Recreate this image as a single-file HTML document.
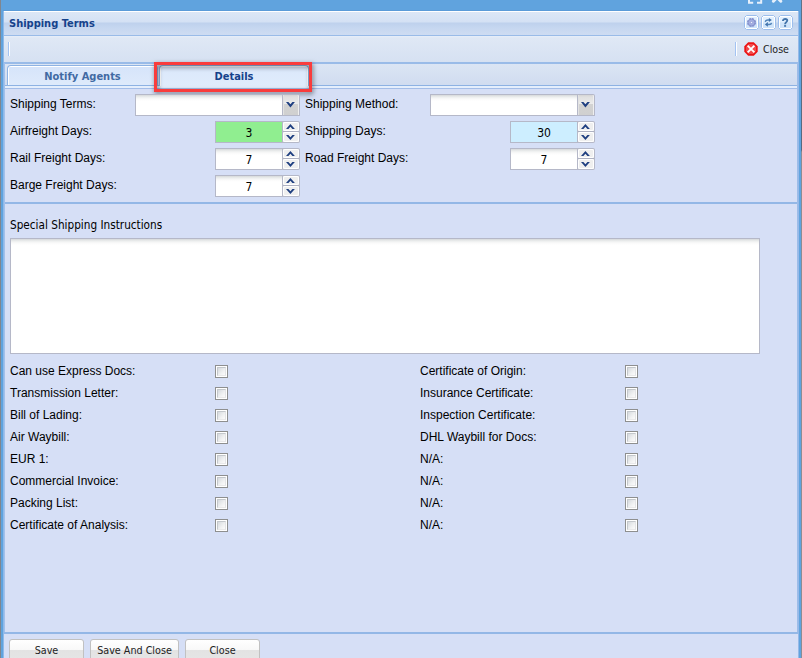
<!DOCTYPE html>
<html>
<head>
<meta charset="utf-8">
<title>Shipping Terms</title>
<style>
html,body{margin:0;padding:0;}
body{width:802px;height:658px;overflow:hidden;position:relative;background:#60a3de;font-family:"Liberation Sans",Arial,sans-serif;font-size:12px;color:#000;}
.abs{position:absolute;}
.tah{font-family:"DejaVu Sans Condensed","DejaVu Sans",sans-serif;}
#edgeL{left:0;top:0;width:1px;height:658px;background:#80868f;}
#edgeR{left:801px;top:0;width:1px;height:658px;background:linear-gradient(#5e7388 0,#56697f 150px,#8b8c94 152px,#8b8c94 100%);}
#frameL{left:3px;top:11px;width:1px;height:647px;background:#8fb9e9;}
#frameR{left:798px;top:11px;width:1px;height:647px;background:#96b9e8;}
#hdrTopShade{left:3px;top:10px;width:796px;height:1px;background:#5a9bd8;}
#hdr{left:4px;top:11px;width:794px;height:24px;background:linear-gradient(#ffffff 0,#ffffff 1px,#dce7f6 1px,#d4e1f4 11px,#bed1ed 12px,#c6d7f0 17px,#cedcf2 24px);}
#hdrB{left:4px;top:35px;width:794px;height:1px;background:#99bbe8;}
#title{left:9px;top:17px;font-size:11px;font-weight:bold;color:#15428b;line-height:14px;white-space:nowrap;}
.tool{position:absolute;top:15px;width:12px;height:13px;border:1px solid #8db2e3;border-radius:3px;background:linear-gradient(#ffffff 0,#eaf3fd 6px,#d5e6fb 7px,#deebfc 13px);}
#tbar{left:4px;top:36px;width:794px;height:26px;background:linear-gradient(#e7eef9 0,#dfe8f5 2px,#d6e1f2 26px);}
#tbarB{left:4px;top:62px;width:794px;height:2px;background:#99bbe8;}
.sep{position:absolute;width:1px;height:14px;top:42px;}
#strip{left:4px;top:64px;width:794px;height:21px;background:linear-gradient(#dbe5f4,#d0dcf0);}
#stripB{left:4px;top:85px;width:794px;height:1px;background:#8db2e3;}
#spacer{left:4px;top:86px;width:794px;height:2px;background:#e4eefc;}
#spacerB{left:4px;top:88px;width:794px;height:1px;background:#a3bde8;}
#pbL{left:4px;top:63px;width:1px;height:569px;background:#a3c0ea;}
#pbR{left:797px;top:63px;width:1px;height:569px;background:#9dbce8;}
#bodyp{left:4px;top:89px;width:794px;height:569px;background:#d6dff6;}
.tab{position:absolute;top:65px;height:20px;border:1px solid #8db2e3;border-bottom:none;border-radius:4px 4px 0 0;box-sizing:border-box;text-align:center;font-size:11px;font-weight:bold;line-height:14px;}
.tab{box-shadow:inset 1px 0 0 #fff,inset -1px 0 0 #fff;}
.tab span{display:block;padding-top:4px;}
.lbl{position:absolute;white-space:nowrap;line-height:14px;font-size:12px;}
.inp{position:absolute;box-sizing:border-box;height:22px;border:1px solid #b5b8c8;background:#fff linear-gradient(#d6d9da 0,#eceeee 2px,#fafafa 4px,#ffffff 6px);}
.num{text-align:center;font-size:12px;line-height:22px;}
.trig{position:absolute;box-sizing:border-box;width:17px;height:22px;border:1px solid #b5b8c8;border-left:none;border-radius:0 2px 0 0;background:linear-gradient(#d4d4d4 0,#e0e0e0 2px,#ececec 9px,#d2d2d2 9px,#d0d0d0 20px);box-shadow:inset -1px 0 0 #efefef,inset 1px 0 0 #e2e2e2;}
.spin{position:absolute;box-sizing:border-box;width:17px;height:22px;border:1px solid #b5b8c8;border-left:none;border-radius:0 2px 2px 0;background:#efefef;}
.hsep{position:absolute;left:4px;width:794px;height:2px;background:#93b7e6;}
.cb{position:absolute;width:11px;height:11px;border:1px solid #8e8f8f;background:#fff;}
.cb i{position:absolute;left:1px;top:1px;width:9px;height:9px;box-sizing:border-box;border:1px solid #c4c8cc;border-right-color:#e3e4e6;border-bottom-color:#e9e9ea;background:linear-gradient(135deg,#d6dade 0,#f0f1f2 60%,#fbfbfb 100%);}
.btn{position:absolute;top:639px;height:24px;box-sizing:border-box;border:1px solid #c1c1c1;border-radius:3px;background:linear-gradient(#ffffff 0,#f8f8f8 10px,#e3e3e3 10px,#e6e6e6 24px);text-align:center;font-size:10.7px;line-height:13px;color:#222;}
.btn span{display:block;padding-top:4px;}
</style>
</head>
<body>
<div id="edgeL" class="abs"></div>
<div id="edgeR" class="abs"></div>

<!-- window chrome icons cut at the top -->
<svg class="abs" style="left:746px;top:0" width="40" height="6" viewBox="0 0 40 6">
  <path d="M3 0V2.8H7.2M15.2 0V2.8H11" fill="none" stroke="#e6f0fb" stroke-width="2" stroke-linejoin="miter"/>
  <path d="M29.6 -1L27.4 1.2M32.6 -1L34.8 1.2" fill="none" stroke="#e6f0fb" stroke-width="3" stroke-linecap="round"/>
</svg>

<div id="hdrTopShade" class="abs"></div>
<div id="frameL" class="abs"></div>
<div id="frameR" class="abs"></div>
<div id="hdr" class="abs"></div>
<div id="hdrB" class="abs"></div>
<div id="title" class="abs tah">Shipping Terms</div>

<!-- header tools -->
<svg class="abs" style="left:744px;top:15px" width="15" height="15" viewBox="0 0 15 15"><path d="M2.5 .5H12.5L14.5 2.5V12.5L12.5 14.5H2.5L.5 12.5V2.5Z" fill="#ffffff" stroke="#9dbeec"/><rect x="2" y="2" width="11" height="5.2" fill="#e2f0fe"/><rect x="2" y="7.2" width="11" height="5.8" fill="#cfe4fa"/>
  <circle cx="7.5" cy="7.5" r="4" fill="none" stroke="#8490cd" stroke-width="1.1" stroke-dasharray="2.1 1.04"/>
  <circle cx="7.5" cy="7.5" r="3.5" fill="#a3aee0" stroke="#8490cd" stroke-width="1"/>
  <circle cx="7.5" cy="7.5" r="1.1" fill="#f0f3fc" stroke="#8f97d2" stroke-width=".7"/>
</svg>
<svg class="abs" style="left:761px;top:15px" width="15" height="15" viewBox="0 0 15 15"><path d="M2.5 .5H12.5L14.5 2.5V12.5L12.5 14.5H2.5L.5 12.5V2.5Z" fill="#ffffff" stroke="#9dbeec"/><rect x="2" y="2" width="11" height="5.2" fill="#e2f0fe"/><rect x="2" y="7.2" width="11" height="5.8" fill="#cfe4fa"/>
  <path d="M4.3 6.9C4.5 5.5 5.6 5 7 5H8.2" fill="none" stroke="#4f82b8" stroke-width="1.4"/>
  <path d="M7.9 2.9L10.9 5L7.9 7.1Z" fill="#3f72ac"/>
  <path d="M10.6 7.9C10.4 9.1 9.4 9.5 8 9.5H6.6" fill="none" stroke="#4f82b8" stroke-width="1.4"/>
  <path d="M6.9 7.1L3.9 9.4L6.9 11.8Z" fill="#3f72ac"/>
</svg>
<svg class="abs" style="left:778px;top:15px" width="15" height="15" viewBox="0 0 15 15"><path d="M2.5 .5H12.5L14.5 2.5V12.5L12.5 14.5H2.5L.5 12.5V2.5Z" fill="#ffffff" stroke="#9dbeec"/><rect x="2" y="2" width="11" height="5.2" fill="#e2f0fe"/><rect x="2" y="7.2" width="11" height="5.8" fill="#cfe4fa"/>
  <path d="M4.9 5.9C4.9 4.5 6 4 7.2 4C8.5 4 9.3 4.6 9.3 5.6C9.3 7.1 7.1 7.3 7.1 9.2" fill="none" stroke="#4274ab" stroke-width="1.8"/>
  <rect x="6.1" y="10.1" width="2" height="1.7" fill="#4274ab"/>
</svg>

<!-- toolbar -->
<div id="tbar" class="abs"></div>
<div id="tbarB" class="abs"></div>
<div class="sep" style="left:8px;background:#a3c3f2"></div>
<div class="sep" style="left:9px;background:#ffffff"></div>
<div class="sep" style="left:735px;background:#a3c3f2"></div>
<div class="sep" style="left:736px;background:#ffffff"></div>
<svg class="abs" style="left:744px;top:42px" width="14" height="14" viewBox="0 0 14 14">
  <path d="M4.2 0.3H9.8L13.7 4.2V9.8L9.8 13.7H4.2L0.3 9.8V4.2Z" fill="#ec1414"/>
  <path d="M4.9 2H9.1L12 4.9V9.1L9.1 12H4.9L2 9.1V4.9Z" fill="#f24a4a"/>
  <path d="M4.3 4.3L9.7 9.7M9.7 4.3L4.3 9.7" stroke="#ffffff" stroke-width="1.9" stroke-linecap="square"/>
</svg>
<div class="abs tah" style="left:763px;top:42px;font-size:10.6px;line-height:14px;color:#222;white-space:nowrap">Close</div>

<!-- tab strip -->
<div id="strip" class="abs"></div>
<div id="stripB" class="abs"></div>
<div id="spacer" class="abs"></div>
<div id="spacerB" class="abs"></div>
<div class="tab tah" style="left:7px;width:151px;background:linear-gradient(#ffffff 0,#ffffff 1px,#d6e4fa 1px,#deeafb 19px);color:#416aa3"><span>Notify Agents</span></div>
<div class="tab tah" style="left:159px;width:150px;height:21px;background:linear-gradient(#ffffff 0,#ffffff 1px,#dbe8fb 1px,#e0ecfc 20px);color:#15428b"><span>Details</span></div>

<!-- body -->
<div id="bodyp" class="abs"></div>
<!-- red highlight -->
<div class="abs" style="left:154px;top:62px;width:152px;height:24px;border:3px solid #f93c3c;filter:drop-shadow(1px 2px 2.5px rgba(0,0,0,.55))"></div>

<div class="lbl" style="left:10px;top:97px">Shipping Terms:</div>
<div class="inp" style="left:135px;top:94px;width:148px"></div>
<div class="trig" style="left:283px;top:94px"><svg width="16" height="20" viewBox="0 0 16 20" style="display:block"><path d="M3 7H5.4L7.4 9.2L9.4 7H11.9L7.4 12.5Z" fill="#1f3f80"/></svg></div>
<div class="lbl" style="left:305px;top:97px">Shipping Method:</div>
<div class="inp" style="left:430px;top:94px;width:148px"></div>
<div class="trig" style="left:578px;top:94px"><svg width="16" height="20" viewBox="0 0 16 20" style="display:block"><path d="M3 7H5.4L7.4 9.2L9.4 7H11.9L7.4 12.5Z" fill="#1f3f80"/></svg></div>

<div class="lbl" style="left:10px;top:124px">Airfreight Days:</div>
<div class="inp num tah" style="left:215px;top:121px;width:68px;background:#90ee90">3</div>
<div class="spin" style="left:283px;top:121px"><svg width="16" height="20" viewBox="0 0 16 20" style="display:block"><rect x="0.5" y="0.5" width="15" height="8" rx="1.5" fill="#efefef" stroke="#ffffff"/><rect x="0" y="9" width="16" height="1" fill="#aeb1c2"/><rect x="0.5" y="10.5" width="15" height="9" rx="1.5" fill="#efefef" stroke="#ffffff"/><path d="M7.4 2L11.9 7H9.4L7.4 4.8L5.4 7H3Z" fill="#1f3f80"/><path d="M3 13H5.4L7.4 15.2L9.4 13H11.9L7.4 18Z" fill="#1f3f80"/></svg></div>
<div class="lbl" style="left:305px;top:124px">Shipping Days:</div>
<div class="inp num tah" style="left:510px;top:121px;width:68px;background:#cdeeff">30</div>
<div class="spin" style="left:578px;top:121px"><svg width="16" height="20" viewBox="0 0 16 20" style="display:block"><rect x="0.5" y="0.5" width="15" height="8" rx="1.5" fill="#efefef" stroke="#ffffff"/><rect x="0" y="9" width="16" height="1" fill="#aeb1c2"/><rect x="0.5" y="10.5" width="15" height="9" rx="1.5" fill="#efefef" stroke="#ffffff"/><path d="M7.4 2L11.9 7H9.4L7.4 4.8L5.4 7H3Z" fill="#1f3f80"/><path d="M3 13H5.4L7.4 15.2L9.4 13H11.9L7.4 18Z" fill="#1f3f80"/></svg></div>

<div class="lbl" style="left:10px;top:151px">Rail Freight Days:</div>
<div class="inp num tah" style="left:215px;top:148px;width:68px">7</div>
<div class="spin" style="left:283px;top:148px"><svg width="16" height="20" viewBox="0 0 16 20" style="display:block"><rect x="0.5" y="0.5" width="15" height="8" rx="1.5" fill="#efefef" stroke="#ffffff"/><rect x="0" y="9" width="16" height="1" fill="#aeb1c2"/><rect x="0.5" y="10.5" width="15" height="9" rx="1.5" fill="#efefef" stroke="#ffffff"/><path d="M7.4 2L11.9 7H9.4L7.4 4.8L5.4 7H3Z" fill="#1f3f80"/><path d="M3 13H5.4L7.4 15.2L9.4 13H11.9L7.4 18Z" fill="#1f3f80"/></svg></div>
<div class="lbl" style="left:305px;top:151px">Road Freight Days:</div>
<div class="inp num tah" style="left:510px;top:148px;width:68px">7</div>
<div class="spin" style="left:578px;top:148px"><svg width="16" height="20" viewBox="0 0 16 20" style="display:block"><rect x="0.5" y="0.5" width="15" height="8" rx="1.5" fill="#efefef" stroke="#ffffff"/><rect x="0" y="9" width="16" height="1" fill="#aeb1c2"/><rect x="0.5" y="10.5" width="15" height="9" rx="1.5" fill="#efefef" stroke="#ffffff"/><path d="M7.4 2L11.9 7H9.4L7.4 4.8L5.4 7H3Z" fill="#1f3f80"/><path d="M3 13H5.4L7.4 15.2L9.4 13H11.9L7.4 18Z" fill="#1f3f80"/></svg></div>

<div class="lbl" style="left:10px;top:178px">Barge Freight Days:</div>
<div class="inp num tah" style="left:215px;top:175px;width:68px">7</div>
<div class="spin" style="left:283px;top:175px"><svg width="16" height="20" viewBox="0 0 16 20" style="display:block"><rect x="0.5" y="0.5" width="15" height="8" rx="1.5" fill="#efefef" stroke="#ffffff"/><rect x="0" y="9" width="16" height="1" fill="#aeb1c2"/><rect x="0.5" y="10.5" width="15" height="9" rx="1.5" fill="#efefef" stroke="#ffffff"/><path d="M7.4 2L11.9 7H9.4L7.4 4.8L5.4 7H3Z" fill="#1f3f80"/><path d="M3 13H5.4L7.4 15.2L9.4 13H11.9L7.4 18Z" fill="#1f3f80"/></svg></div>

<div class="hsep" style="top:202px"></div>

<div class="lbl tah" style="left:10px;top:218px;font-size:11.7px">Special Shipping Instructions</div>
<div class="inp" style="left:10px;top:238px;width:750px;height:116px"></div>

<div class="lbl" style="left:10px;top:364px">Can use Express Docs:</div><div class="cb" style="left:215px;top:365px"><i></i></div>
<div class="lbl" style="left:10px;top:386px">Transmission Letter:</div><div class="cb" style="left:215px;top:387px"><i></i></div>
<div class="lbl" style="left:10px;top:408px">Bill of Lading:</div><div class="cb" style="left:215px;top:409px"><i></i></div>
<div class="lbl" style="left:10px;top:430px">Air Waybill:</div><div class="cb" style="left:215px;top:431px"><i></i></div>
<div class="lbl" style="left:10px;top:452px">EUR 1:</div><div class="cb" style="left:215px;top:453px"><i></i></div>
<div class="lbl" style="left:10px;top:474px">Commercial Invoice:</div><div class="cb" style="left:215px;top:475px"><i></i></div>
<div class="lbl" style="left:10px;top:496px">Packing List:</div><div class="cb" style="left:215px;top:497px"><i></i></div>
<div class="lbl" style="left:10px;top:518px">Certificate of Analysis:</div><div class="cb" style="left:215px;top:519px"><i></i></div>

<div class="lbl" style="left:420px;top:364px">Certificate of Origin:</div><div class="cb" style="left:625px;top:365px"><i></i></div>
<div class="lbl" style="left:420px;top:386px">Insurance Certificate:</div><div class="cb" style="left:625px;top:387px"><i></i></div>
<div class="lbl" style="left:420px;top:408px">Inspection Certificate:</div><div class="cb" style="left:625px;top:409px"><i></i></div>
<div class="lbl" style="left:420px;top:430px">DHL Waybill for Docs:</div><div class="cb" style="left:625px;top:431px"><i></i></div>
<div class="lbl" style="left:420px;top:452px">N/A:</div><div class="cb" style="left:625px;top:453px"><i></i></div>
<div class="lbl" style="left:420px;top:474px">N/A:</div><div class="cb" style="left:625px;top:475px"><i></i></div>
<div class="lbl" style="left:420px;top:496px">N/A:</div><div class="cb" style="left:625px;top:497px"><i></i></div>
<div class="lbl" style="left:420px;top:518px">N/A:</div><div class="cb" style="left:625px;top:519px"><i></i></div>

<div class="hsep" style="top:632px"></div>
<div id="pbL" class="abs"></div>
<div id="pbR" class="abs"></div>

<div class="btn tah" style="left:9px;width:75px"><span>Save</span></div>
<div class="btn tah" style="left:90px;width:89px"><span>Save And Close</span></div>
<div class="btn tah" style="left:185px;width:75px"><span>Close</span></div>
</body>
</html>
